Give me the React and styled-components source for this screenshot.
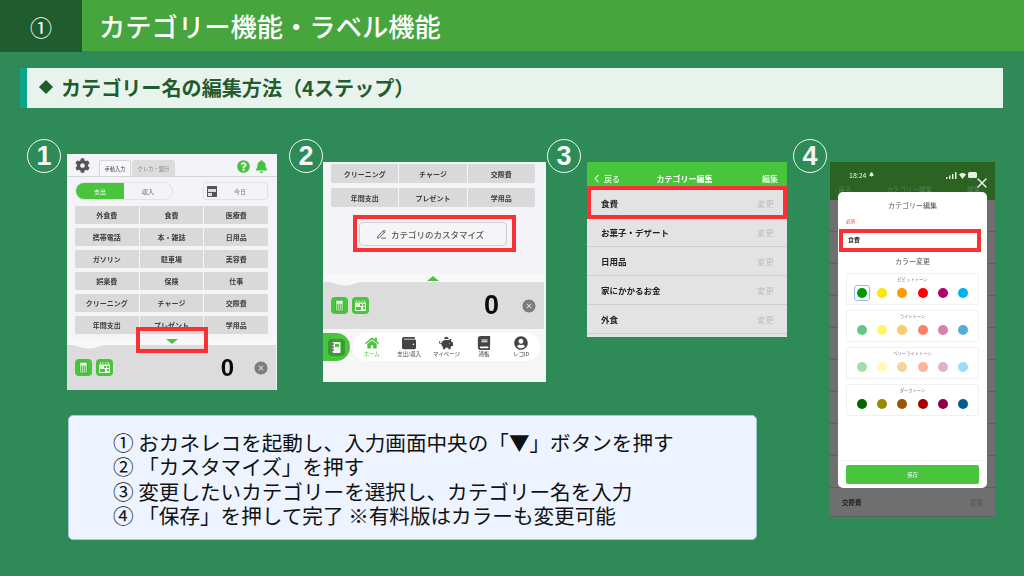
import React from "react";
import styled, { createGlobalStyle } from "styled-components";
import { FaBell, FaBook, FaCog, FaHome, FaPiggyBank, FaQuestionCircle, FaUserCircle, FaWallet } from "react-icons/fa";
import { IoChevronBack, IoCloseCircle } from "react-icons/io5";
import { LuPencilLine, LuX } from "react-icons/lu";

const jp = `"Noto Sans CJK JP", "Noto Sans", sans-serif`;

const GlobalStyle = createGlobalStyle`
  html, body { margin: 0; padding: 0; }
  body { width: 1024px; height: 576px; overflow: hidden; background: #2e8b57; font-family: ${jp}; }
  * { box-sizing: border-box; }
`;

const Slide = styled.div`
  width: 1024px;
  height: 576px;
  display: flex;
  flex-direction: column;
  background: #2e8b57;
`;

const Header = styled.header`
  flex: none;
  height: 51px;
  display: flex;
  background: #46a53d;
  color: #fff;
`;

const HeaderNumber = styled.div`
  width: 82px;
  height: 52px;
  display: flex;
  align-items: center;
  justify-content: center;
  background: #1f5c2e;
  font-size: 22px;
`;

const HeaderTitle = styled.h1`
  margin: 0 0 0 17px;
  font-size: 26.3px;
  font-weight: 500;
  line-height: 51px;
  white-space: nowrap;
`;

const SectionBar = styled.div`
  flex: none;
  margin: 17px 21px 0 20px;
  height: 40px;
  display: flex;
  align-items: center;
  gap: 10px;
  padding: 0 0 2px 11px;
  background: #e9f3ee;
  border-left: 7px solid #0aa58c;
  color: #1f5c2e;
  font-size: 20.1px;
  font-weight: 700;
  white-space: nowrap;
`;

const Diamond = styled.span`
  width: 10px;
  height: 10px;
  margin-left: 3px;
  background: #1f5c2e;
  transform: rotate(45deg);
`;

const StepRow = styled.div`
  flex: none;
  display: flex;
  padding: 31px 0 0 27px;
  height: 307px;
`;

const Step = styled.section`
  width: ${(p) => p.$width}px;
  display: flex;
  gap: ${(p) => p.$gap}px;
  align-items: flex-start;
`;

const Badge = styled.div`
  flex: none;
  width: 34px;
  height: 34px;
  display: flex;
  align-items: center;
  justify-content: center;
  border: 1.5px solid #f3f8f4;
  border-radius: 50%;
  color: #f3f8f4;
  font-family: "Liberation Sans", sans-serif;
  font-size: 27px;
  font-weight: 700;
`;

const Screen = styled.div`
  position: relative;
  flex: none;
  width: ${(p) => p.$w}px;
  height: ${(p) => p.$h}px;
  margin-top: ${(p) => p.$top}px;
  display: flex;
  flex-direction: column;
  overflow: hidden;
  background: ${(p) => p.$bg || "#f3f3f8"};
  filter: blur(0.3px);
`;

const Highlight = styled.div`
  position: absolute;
  left: ${(p) => p.$x}px;
  top: ${(p) => p.$y}px;
  width: ${(p) => p.$w}px;
  height: ${(p) => p.$h}px;
  border: 4px solid #fb3035;
  z-index: 5;
`;

const TopBar = styled.div`
  height: 23px;
  flex: none;
  display: flex;
  align-items: flex-end;
  padding: 0 9px 0 8px;
  border-bottom: 1px solid #d6d6da;
  color: #555;
`;

const GearIcon = styled(FaCog)`
  font-size: 15px;
  margin: 0 9px 3px 0;
  color: #555;
`;

const Tab = styled.div`
  width: ${(p) => p.$w}px;
  height: 16px;
  margin-right: 1px;
  display: flex;
  align-items: center;
  justify-content: center;
  border-radius: 3px 3px 0 0;
  font-size: 5.3px;
  color: ${(p) => (p.$active ? "#444" : "#888")};
  background: ${(p) => (p.$active ? "#f7f7fa" : "#dcdcdc")};
  border: 1px solid ${(p) => (p.$active ? "#d6d6da" : "#dcdcdc")};
  border-bottom: 0;
`;

const TopIcons = styled.div`
  margin: 0 0 3px auto;
  display: flex;
  gap: 5px;
  font-size: 13px;
  color: #45c23c;
`;

const Controls = styled.div`
  height: 18px;
  flex: none;
  margin-top: 5px;
  padding: 0 9px 0 8px;
  display: flex;
  justify-content: space-between;
`;

const Toggle = styled.div`
  width: 98px;
  display: flex;
  border: 1px solid #e2e2e6;
  border-radius: 9px;
  overflow: hidden;
  font-size: 6px;
`;

const ToggleItem = styled.div`
  flex: 1;
  display: flex;
  align-items: center;
  justify-content: center;
  color: ${(p) => (p.$on ? "#fff" : "#666")};
  background: ${(p) => (p.$on ? "#48c43d" : "transparent")};
`;

const DateBox = styled.div`
  width: 65px;
  display: flex;
  align-items: center;
  padding: 0 21px 0 3px;
  justify-content: space-between;
  border: 1px solid #e2e2e6;
  border-radius: 3px;
  font-size: 6px;
  color: #777;
`;

const CategoryGrid = styled.div`
  flex: none;
  margin-top: ${(p) => p.$top}px;
  padding: ${(p) => p.$pad};
  display: flex;
  flex-direction: column;
  gap: ${(p) => p.$gap}px;
`;

const CategoryRow = styled.div`
  height: ${(p) => p.$h}px;
  display: grid;
  grid-template-columns: repeat(3, 1fr);
  gap: 1px;
  border-radius: 2px;
  overflow: hidden;
`;

const CategoryCell = styled.div`
  display: flex;
  align-items: center;
  justify-content: center;
  background: #d9d9d9;
  color: #3c3c3c;
  font-size: 7px;
  font-weight: 700;
  white-space: nowrap;
`;

const Drawer = styled.div`
  position: relative;
  flex: none;
  height: ${(p) => p.$h}px;
  background: linear-gradient(#f3f3f8 0, #f3f3f8 calc(100% - 8px), #f8f8f8 calc(100% - 8px));
`;

const Triangle = styled.span`
  position: absolute;
  left: ${(p) => p.$x}px;
  bottom: ${(p) => p.$bottom}px;
  width: 0;
  height: 0;
  border-left: 6px solid transparent;
  border-right: 6px solid transparent;
  border-${(p) => (p.$up ? "bottom" : "top")}: 5px solid #48c43d;
  z-index: 2;
`;

const NotchShape = styled.svg`
  position: absolute;
  left: ${(p) => p.$x}px;
  bottom: -4px;
  width: 44px;
  height: 5px;
  z-index: 1;
`;

const BottomBar = styled.div`
  flex: none;
  height: ${(p) => p.$h}px;
  width: ${(p) => p.$w}px;
  display: flex;
  align-items: center;
  padding: 0 7px 0 8px;
  gap: 4px;
  background: #dcdcdc;
`;

const ToolIcon = styled.svg`
  width: 17px;
  height: 17px;
  flex: none;
`;

const Amount = styled.div`
  margin-left: auto;
  margin-right: ${(p) => p.$gap}px;
  font-family: "Liberation Sans", sans-serif;
  font-size: ${(p) => p.$size}px;
  font-weight: 700;
  color: #0a0a0a;
`;

const ClearIcon = styled(IoCloseCircle)`
  font-size: 16px;
  color: #7c7c7c;
`;

const CustomButton = styled.div`
  width: 148px;
  height: 24px;
  margin: 15px 0 0 36px;
  flex: none;
  display: flex;
  align-items: center;
  justify-content: center;
  gap: 4px;
  padding-right: 6px;
  background: #f5f5f8;
  border: 1px solid #cfcfd2;
  border-radius: 4px;
  color: #555;
  font-size: 8.5px;
  font-weight: 500;
  svg { font-size: 11px; }
`;

const NavArea = styled.div`
  flex: 1;
  display: flex;
  align-items: flex-start;
  gap: 3px;
  padding-top: 4px;
  background: #f6f6f6;
`;

const NoteButton = styled.div`
  width: 27px;
  height: 28px;
  display: flex;
  align-items: center;
  justify-content: center;
  background: #48c43d;
  border-radius: 0 14px 14px 0;
`;

const NavPill = styled.nav`
  width: 187px;
  height: 28px;
  display: grid;
  grid-template-columns: repeat(5, 1fr);
  background: #fff;
  border-radius: 14px;
`;

const NavItem = styled.div`
  display: flex;
  flex-direction: column;
  align-items: center;
  justify-content: center;
  color: ${(p) => (p.$on ? "#48c43d" : "#444")};
  font-size: 5.4px;
  line-height: 7px;
  white-space: nowrap;
  svg { font-size: 14px; margin-bottom: 1px; }
`;

const ListHeader = styled.div`
  flex: none;
  height: 24px;
  padding: 8px 9px 0 4px;
  display: grid;
  grid-template-columns: 1fr auto 1fr;
  align-items: center;
  background: #48c43d;
  color: #fff;
  font-size: 8px;
  font-weight: 700;
`;

const BackLink = styled.div`
  display: flex;
  align-items: center;
  gap: 2px;
  font-weight: 500;
  opacity: 0.95;
  svg { font-size: 11px; }
`;

const EditLink = styled.div`
  text-align: right;
  font-weight: 500;
`;

const ListRow = styled.div`
  flex: none;
  height: ${(p) => p.$h}px;
  display: flex;
  align-items: center;
  justify-content: space-between;
  padding: ${(p) => p.$drop || 0}px 13px 0 14px;
  background: #e3e3e3;
  border-bottom: 1px solid #cfcfcf;
  color: #222;
  font-size: 8.5px;
  font-weight: 700;
`;

const ListAction = styled.span`
  color: #bdbdbd;
  font-weight: 400;
`;

const PhoneHeader = styled.div`
  flex: none;
  height: 38px;
  padding: 8px 9px 0 5px;
  background: #2a6322;
  color: #e4efe2;
  font-size: 7px;
`;

const StatusRow = styled.div`
  height: 9px;
  padding-left: 14px;
  padding-right: 9px;
  display: flex;
  align-items: center;
  justify-content: space-between;
`;

const StatusTime = styled.span`
  display: flex;
  align-items: center;
  gap: 2px;
  svg { font-size: 5px; }
`;

const DimNav = styled.div`
  margin-top: 6px;
  display: flex;
  justify-content: space-between;
  padding-right: 6px;
  color: #56805a;
  font-size: 6.5px;
  line-height: 9px;
`;

const StatusIcons = styled.svg`
  width: 31px;
  height: 8px;
`;

const DimRow = styled.div`
  flex: none;
  height: ${(p) => p.$h}px;
  display: flex;
  align-items: center;
  justify-content: space-between;
  padding: 0 12px;
  background: #6f6f6f;
  border-bottom: 1px solid #5f5f5f;
  color: #222;
  font-size: 6.5px;
  font-weight: 700;
`;

const DimAction = styled.span`
  color: #565656;
  font-weight: 400;
`;

const CloseIcon = styled(LuX)`
  position: absolute;
  right: 5px;
  top: 13px;
  font-size: 16px;
  color: #f2f2f2;
  z-index: 3;
`;

const Modal = styled.div`
  position: absolute;
  left: 8px;
  top: 30px;
  width: 149px;
  height: 296px;
  display: flex;
  flex-direction: column;
  padding: 0 8px 4px;
  background: #fff;
  border-radius: 5px;
  z-index: 2;
`;

const ModalTitle = styled.div`
  margin-top: 7px;
  text-align: center;
  font-size: 7px;
  line-height: 12px;
  color: #555;
`;

const RequiredLabel = styled.div`
  margin-top: 7px;
  font-size: 4.5px;
  line-height: 6px;
  color: #f5333a;
`;

const NameInput = styled.div`
  height: 19px;
  margin-top: 5.5px;
  padding-left: 2px;
  display: flex;
  align-items: center;
  font-size: 6px;
  font-weight: 700;
  color: #333;
`;

const ColorTitle = styled.div`
  margin-top: 6.5px;
  text-align: center;
  font-size: 7px;
  line-height: 12px;
  color: #555;
`;

const ToneGroup = styled.div`
  height: 32px;
  margin-top: ${(p) => p.$top}px;
  padding-top: 2px;
  border: 1px solid #f0f0f0;
  border-radius: 2px;
`;

const ToneLabel = styled.div`
  text-align: center;
  font-size: 4.3px;
  line-height: 7px;
  color: #777;
`;

const SwatchRow = styled.div`
  display: grid;
  grid-template-columns: repeat(6, 20.4px);
  justify-content: center;
  margin-top: 2px;
`;

const SwatchFrame = styled.div`
  height: 16px;
  width: 16px;
  justify-self: center;
  display: flex;
  align-items: center;
  justify-content: center;
  border: ${(p) => (p.$selected ? "1px solid #8dbdf5" : "0")};
  border-radius: 3px;
`;

const Swatch = styled.span`
  width: 10px;
  height: 10px;
  border-radius: 50%;
  background: ${(p) => p.$color};
`;

const ModalFooter = styled.div`
  margin: auto -8px 0;
  padding: 4px 8px 0;
  border-top: 1px solid #f5f5f5;
`;

const SaveButton = styled.div`
  height: 19px;
  display: flex;
  align-items: center;
  justify-content: center;
  background: #48c43d;
  border-radius: 2px;
  color: #eef;
  font-size: 5.5px;
`;

const InstructionBox = styled.div`
  flex: none;
  width: 689px;
  height: 125px;
  margin-left: 68px;
  padding: 14px 0 0 44px;
  background: #edf4ff;
  border: 1px solid #a9c4d8;
  border-radius: 5px;
  color: #111;
  font-size: 20.6px;
  line-height: 24.4px;
  white-space: nowrap;
`;

const categories = [
  ["外食費", "食費", "医療費"],
  ["携帯電話", "本・雑誌", "日用品"],
  ["ガソリン", "駐車場", "美容費"],
  ["娯楽費", "保険", "仕事"],
  ["クリーニング", "チャージ", "交際費"],
  ["年間支出", "プレゼント", "学用品"],
];

const tones = [
  { label: "ビビットトーン", colors: ["#009900", "#ffe600", "#ff9900", "#ff0000", "#b3006b", "#00aff0"] },
  { label: "ライトトーン", colors: ["#66c68a", "#fff56b", "#f9cb6b", "#ff8066", "#d97fb0", "#55add8"] },
  { label: "ベリーライトトーン", colors: ["#a6dbb0", "#fffbb0", "#f3d69b", "#ffb29a", "#e0b0d0", "#99ddfa"] },
  { label: "ダークトーン", colors: ["#006600", "#998800", "#995500", "#aa0000", "#8f0045", "#005f8f"] },
];

const listItems = ["お菓子・デザート", "日用品", "家にかかるお金", "外食"];

function CalcIcon() {
  return (
    <ToolIcon viewBox="0 0 17 17">
      <rect width="17" height="17" rx="4" fill="#48c43d" />
      <rect x="4.5" y="3" width="8" height="11" rx="1" fill="#a5e29f" stroke="#2f9a2a" strokeWidth=".6" />
      <rect x="5.5" y="4" width="6" height="2.4" fill="#e6f7e3" />
      <path d="M6 8h1M8 8h1M10 8h1M6 10h1M8 10h1M10 10h1M6 12h1M8 12h1M10 12h1" stroke="#2f9a2a" strokeWidth="1" />
    </ToolIcon>
  );
}

function CalendarIcon() {
  return (
    <ToolIcon viewBox="0 0 17 17">
      <rect width="17" height="17" rx="4" fill="#48c43d" />
      <rect x="3" y="3" width="11" height="11" fill="#e9f8e6" />
      <path d="M3 3h11v2.5H3z" fill="#48c43d" />
      <path d="M4.500 3v2M7 3v2M10 3v2M12.500 3v2" stroke="#e9f8e6" strokeWidth=".7" />
      <path d="M8 7h2v2H8zM11 7h2v2h-2zM4 10h5v3H4zM11 10h2v2h-2z" fill="#48c43d" />
    </ToolIcon>
  );
}

function SmallCalendar() {
  return (
    <svg width="10" height="11" viewBox="0 0 10 11">
      <rect width="10" height="11" fill="#555" />
      <rect x="1" y="3" width="8" height="3" fill="#ddd" />
      <rect x="1" y="7" width="4" height="3" fill="#ddd" />
    </svg>
  );
}

function NoteIcon() {
  return (
    <svg width="17" height="17" viewBox="0 0 17 17">
      <rect width="17" height="17" rx="4" fill="#3a9a33" />
      <rect x="4.5" y="3" width="8" height="11" rx="1" fill="#f2f2f2" />
      <path d="M4 5h2M4 8h2M4 11h2" stroke="#333" />
      <rect x="7" y="5" width="4" height="3" fill="#48c43d" />
    </svg>
  );
}

function Notch({ x }) {
  return (
    <NotchShape $x={x} viewBox="0 0 44 5">
      <path d="M0 0H44V.5C34 .5 30 4.500 22 4.500S10 .5 0 .5Z" fill="#f8f8f8" />
    </NotchShape>
  );
}

function Categories({ rows, height, gap, top, pad }) {
  return (
    <CategoryGrid $gap={gap} $top={top} $pad={pad}>
      {rows.map((row) => (
        <CategoryRow key={row[0]} $h={height}>
          {row.map((name) => (
            <CategoryCell key={name}>{name}</CategoryCell>
          ))}
        </CategoryRow>
      ))}
    </CategoryGrid>
  );
}

export default function App() {
  return (
    <Slide>
      <GlobalStyle />
      <Header>
        <HeaderNumber>①</HeaderNumber>
        <HeaderTitle>カテゴリー機能・ラベル機能</HeaderTitle>
      </Header>
      <SectionBar>
        <Diamond />
        カテゴリー名の編集方法（4ステップ）
      </SectionBar>

      <StepRow>
        {/* step 1 */}
        <Step $width={262} $gap={6}>
          <Badge>1</Badge>
          <Screen $w={210} $h={236} $top={15}>
            <TopBar>
              <GearIcon />
              <Tab $w={32} $active>手動入力</Tab>
              <Tab $w={43}>クレカ・銀行</Tab>
              <TopIcons>
                <FaQuestionCircle />
                <FaBell />
              </TopIcons>
            </TopBar>
            <Controls>
              <Toggle>
                <ToggleItem $on>支出</ToggleItem>
                <ToggleItem>収入</ToggleItem>
              </Toggle>
              <DateBox>
                <SmallCalendar />
                今日
              </DateBox>
            </Controls>
            <Categories rows={categories} height={18} gap={4} top={6} pad="0 9px 0 8px" />
            <Drawer $h={11}>
              <Triangle $x={99} $bottom={1} />
              <Notch $x={83} />
            </Drawer>
            <BottomBar $h={45} $w={209}>
              <CalcIcon />
              <CalendarIcon />
              <Amount $size={24} $gap={15}>0</Amount>
              <ClearIcon />
            </BottomBar>
            <Highlight $x={69} $y={173} $w={72} $h={26} />
          </Screen>
        </Step>

        {/* step 2 */}
        <Step $width={258} $gap={0}>
          <Badge>2</Badge>
          <Screen $w={223} $h={220} $top={23}>
            <Categories rows={categories.slice(4)} height={19} gap={5} top={2} pad="0 11px 0 8px" />
            <CustomButton>
              <LuPencilLine />
              カテゴリのカスタマイズ
            </CustomButton>
            <Drawer $h={36}>
              <Triangle $x={104} $bottom={1} $up />
              <Notch $x={88} />
            </Drawer>
            <BottomBar $h={47} $w={221}>
              <CalcIcon />
              <CalendarIcon />
              <Amount $size={27} $gap={18}>0</Amount>
              <ClearIcon />
            </BottomBar>
            <NavArea>
              <NoteButton>
                <NoteIcon />
              </NoteButton>
              <NavPill>
                <NavItem $on><FaHome />ホーム</NavItem>
                <NavItem><FaWallet />支出/収入</NavItem>
                <NavItem><FaPiggyBank />マイページ</NavItem>
                <NavItem><FaBook />通帳</NavItem>
                <NavItem><FaUserCircle />レコID</NavItem>
              </NavPill>
            </NavArea>
            <Highlight $x={30} $y={53} $w={163} $h={37} />
          </Screen>
        </Step>

        {/* step 3 */}
        <Step $width={246} $gap={6}>
          <Badge>3</Badge>
          <Screen $w={200} $h={175} $top={23} $bg="#e3e3e3">
            <ListHeader>
              <BackLink>
                <IoChevronBack />
                戻る
              </BackLink>
              <span>カテゴリー編集</span>
              <EditLink>編集</EditLink>
            </ListHeader>
            <ListRow $h={32} $drop={3}>
              食費
              <ListAction>変更</ListAction>
            </ListRow>
            {listItems.map((name) => (
              <ListRow key={name} $h={29}>
                {name}
                <ListAction>変更</ListAction>
              </ListRow>
            ))}
            <Highlight $x={0} $y={24} $w={200} $h={33} />
          </Screen>
        </Step>

        {/* step 4 */}
        <Step $width={202} $gap={3}>
          <Badge>4</Badge>
          <Screen $w={165} $h={355} $top={23} $bg="#6f6f6f">
            <PhoneHeader>
              <StatusRow>
                <StatusTime>
                  18:24
                  <FaBell />
                </StatusTime>
                <StatusIcons viewBox="0 0 31 8">
                  <path d="M0 6h1.500v2H0zM3 4.500h1.500V8H3zM6 3h1.500v5H6zM9 1h1.500v7H9z" fill="#e4efe2" />
                  <path d="M13 3.500a5 5 0 0 1 7 0L16.500 8Z" fill="#e4efe2" />
                  <rect x="22" y="1" width="9" height="6" rx="1.500" fill="#e4efe2" />
                </StatusIcons>
              </StatusRow>
              <DimNav>
                <span>‹ 戻る</span>
                <span>カテゴリー編集</span>
                <span>編集</span>
              </DimNav>
            </PhoneHeader>
            {[1, 2, 3, 4, 5, 6, 7, 8, 9].map((n) => (
              <DimRow key={n} $h={32} />
            ))}
            <DimRow $h={29}>
              交際費
              <DimAction>変更</DimAction>
            </DimRow>
            <CloseIcon />
            <Modal>
              <ModalTitle>カテゴリー編集</ModalTitle>
              <RequiredLabel>必須</RequiredLabel>
              <NameInput>食費</NameInput>
              <ColorTitle>カラー変更</ColorTitle>
              {tones.map((tone, i) => (
                <ToneGroup key={tone.label} $top={i === 0 ? 6 : 5}>
                  <ToneLabel>{tone.label}</ToneLabel>
                  <SwatchRow>
                    {tone.colors.map((color, j) => (
                      <SwatchFrame key={color} $selected={i === 0 && j === 0}>
                        <Swatch $color={color} />
                      </SwatchFrame>
                    ))}
                  </SwatchRow>
                </ToneGroup>
              ))}
              <ModalFooter>
                <SaveButton>保存</SaveButton>
              </ModalFooter>
            </Modal>
            <Highlight $x={9} $y={67} $w={142} $h={23} />
          </Screen>
        </Step>
      </StepRow>

      <InstructionBox>
        ① おカネレコを起動し、入力画面中央の「▼」ボタンを押す
        <br />
        ② 「カスタマイズ」を押す
        <br />
        ③ 変更したいカテゴリーを選択し、カテゴリー名を入力
        <br />
        ④ 「保存」を押して完了 ※有料版はカラーも変更可能
      </InstructionBox>
    </Slide>
  );
}
